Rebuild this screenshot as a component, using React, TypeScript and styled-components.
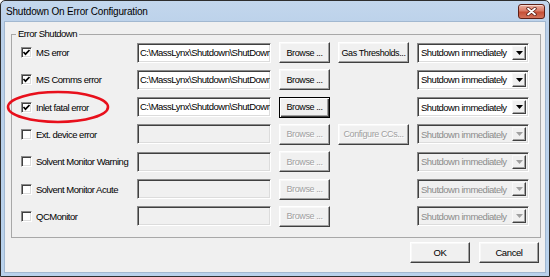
import React from 'react';
import styled, { createGlobalStyle } from 'styled-components';

const GlobalStyle = createGlobalStyle`
    html, body {
        margin: 0;
        padding: 0;
        background: #ffffff;
    }
    body {
        font-family: "Liberation Sans", Arial, sans-serif;
    }
`;

const UI_FONT = `"Liberation Sans", Arial, sans-serif`;

const Window = styled.div`
    position: relative;
    box-sizing: border-box;
    width: 550px;
    height: 277px;
    border: 1px solid #2e2e2e;
    border-radius: 5px 5px 0 0;
    background: linear-gradient(#c3d7ed, #bad0e9 30px, #b9d2ec);
    padding: 0 3px 3px;
    display: flex;
    flex-direction: column;
    overflow: hidden;
`;

const TitleBar = styled.div`
    height: 20px;
    display: flex;
    align-items: center;
    justify-content: space-between;
    padding-left: 2px;
`;

const Title = styled.div`
    font-family: ${UI_FONT};
    font-size: 10px;
    letter-spacing: -0.2px;
    color: #000;
`;

const CloseButton = styled.div`
    box-sizing: border-box;
    width: 27px;
    height: 15px;
    margin-right: 1px;
    border: 1px solid #5e2016;
    border-radius: 3px;
    background: linear-gradient(#eab0a1, #da7b66 45%, #c64f36 55%, #d3735b);
    box-shadow: inset 0 1px 0 rgba(255, 255, 255, 0.55);
    display: flex;
    align-items: center;
    justify-content: center;
`;

const Client = styled.div`
    flex: 1;
    background: #f0f0f0;
    border: 1px solid #a2b8d0;
    display: flex;
    flex-direction: column;
    padding: 6px 4px 0 6px;
`;

const GroupBox = styled.fieldset`
    margin: 0;
    min-width: 0;
    border: 1px solid #a8a8a8;
    padding: 0 0 11px 9px;
`;

const GroupLegend = styled.legend`
    font-family: ${UI_FONT};
    font-size: 9.5px;
    letter-spacing: -0.5px;
    line-height: 12px;
    color: #000;
    padding: 0 2px;
    margin-left: -5px;
`;

const Rows = styled.div`
    display: flex;
    flex-direction: column;
    gap: 7.33px;
    margin-top: 2px;
`;

const Row = styled.div`
    display: grid;
    grid-template-columns: 108px 134px 51px 71px 112px;
    column-gap: 8px;
    align-items: center;
    height: 20px;
`;

const CheckLabel = styled.label`
    display: flex;
    align-items: center;
    gap: 4px;
    font-family: ${UI_FONT};
    font-size: 9.5px;
    letter-spacing: -0.5px;
    color: #000;
    white-space: nowrap;
`;

const CheckBox = styled.span`
    box-sizing: border-box;
    width: 11px;
    height: 11px;
    flex: none;
    background: #fff;
    border: 1px solid;
    border-color: #8a8a8a #ffffff #ffffff #8a8a8a;
    box-shadow: inset 1px 1px 0 #404040, inset -1px -1px 0 #dcdcdc;
    display: flex;
    align-items: center;
    justify-content: center;
`;

const TextBox = styled.div<{ $disabled?: boolean }>`
    box-sizing: border-box;
    height: 20px;
    background: ${p => (p.$disabled ? '#f0f0f0' : '#ffffff')};
    border: 1px solid;
    border-color: #8a8a8a #ffffff #ffffff #8a8a8a;
    box-shadow: inset 1px 1px 0 #404040, inset -1px -1px 0 #dcdcdc;
    padding: 0 2px;
    font-family: ${UI_FONT};
    font-size: 9.5px;
    letter-spacing: -0.5px;
    line-height: 18px;
    color: #000;
    white-space: nowrap;
    overflow: hidden;
`;

const Button = styled.div<{ $disabled?: boolean; $focused?: boolean }>`
    box-sizing: border-box;
    height: 21px;
    background: #f0f0f0;
    border: 1px solid;
    border-color: ${p => (p.$focused ? '#000 #000 #000 #000' : '#ffffff #404040 #404040 #ffffff')};
    box-shadow: ${p =>
        p.$focused
            ? 'inset 1px 1px 0 #ffffff, inset -1px -1px 0 #404040, inset -2px -2px 0 #a0a0a0'
            : 'inset -1px -1px 0 #a0a0a0, inset 1px 1px 0 #f8f8f8'};
    display: flex;
    align-items: center;
    justify-content: center;
    font-family: ${UI_FONT};
    font-size: 9px;
    letter-spacing: -0.4px;
    white-space: nowrap;
    color: ${p => (p.$disabled ? '#a0a0a0' : '#000')};
    text-shadow: ${p => (p.$disabled ? '1px 1px 0 #ffffff' : 'none')};
`;

const Combo = styled.div<{ $disabled?: boolean }>`
    box-sizing: border-box;
    height: 20px;
    background: ${p => (p.$disabled ? '#f0f0f0' : '#ffffff')};
    border: 1px solid;
    border-color: #8a8a8a #ffffff #ffffff #8a8a8a;
    box-shadow: inset 1px 1px 0 #404040, inset -1px -1px 0 #dcdcdc;
    display: flex;
    align-items: center;
    padding: 2px 2px 2px 3px;
`;

const ComboText = styled.div<{ $disabled?: boolean }>`
    flex: 1;
    font-family: ${UI_FONT};
    font-size: 9.5px;
    letter-spacing: -0.5px;
    color: ${p => (p.$disabled ? '#8c8c8c' : '#000')};
    white-space: nowrap;
    overflow: hidden;
`;

const ComboArrow = styled.div`
    box-sizing: border-box;
    width: 14px;
    height: 14px;
    background: #f0f0f0;
    border: 1px solid;
    border-color: #f8f8f8 #404040 #404040 #f8f8f8;
    box-shadow: inset -1px -1px 0 #a0a0a0;
    display: flex;
    align-items: center;
    justify-content: center;
`;

const Footer = styled.div`
    display: flex;
    justify-content: flex-end;
    gap: 9px;
    margin-top: 4px;
    padding-right: 2px;
`;

const FooterButton = styled(Button)`
    width: 60px;
    font-size: 9.5px;
`;

const Annotation = styled.svg`
    position: absolute;
    left: -1px;
    top: -1px;
    width: 550px;
    height: 277px;
    pointer-events: none;
`;

interface ShutdownRow {
    label: string;
    checked: boolean;
    enabled: boolean;
    focused?: boolean;
    extra?: string;
}

const SHUTDOWN_PATH = 'C:\\MassLynx\\Shutdown\\ShutDown.bat';

const rows: ShutdownRow[] = [
    { label: 'MS error', checked: true, enabled: true, extra: 'Gas Thresholds...' },
    { label: 'MS Comms error', checked: true, enabled: true },
    { label: 'Inlet fatal error', checked: true, enabled: true, focused: true },
    { label: 'Ext. device error', checked: false, enabled: false, extra: 'Configure CCs...' },
    { label: 'Solvent Monitor Warning', checked: false, enabled: false },
    { label: 'Solvent Monitor Acute', checked: false, enabled: false },
    { label: 'QCMonitor', checked: false, enabled: false },
];

const CheckMark = () => (
    <svg width="9" height="9" viewBox="0 0 9 9">
        <polyline points="1.5,4 3.5,6.2 7.5,2" fill="none" stroke="#000" strokeWidth="1.7" />
    </svg>
);

const DownArrow = ({ disabled }: { disabled?: boolean }) => (
    <svg width="7" height="4" viewBox="0 0 7 4">
        <polygon points="0,0 7,0 3.5,4" fill={disabled ? '#a0a0a0' : '#000'} />
    </svg>
);

const CloseGlyph = () => (
    <svg width="11" height="9" viewBox="0 0 11 9">
        <path d="M2 1.5 L9 7.5 M9 1.5 L2 7.5" stroke="#5a1c12" strokeWidth="3.4" strokeLinecap="round" />
        <path d="M2 1.5 L9 7.5 M9 1.5 L2 7.5" stroke="#ffffff" strokeWidth="1.8" strokeLinecap="round" />
    </svg>
);

export default function App() {
    return (
        <>
            <GlobalStyle />
            <Window>
                <TitleBar>
                    <Title>Shutdown On Error Configuration</Title>
                    <CloseButton>
                        <CloseGlyph />
                    </CloseButton>
                </TitleBar>
                <Client>
                    <GroupBox>
                        <GroupLegend>Error Shutdown</GroupLegend>
                        <Rows>
                            {rows.map(row => (
                                <Row key={row.label}>
                                    <CheckLabel>
                                        <CheckBox>{row.checked && <CheckMark />}</CheckBox>
                                        {row.label}
                                    </CheckLabel>
                                    <TextBox $disabled={!row.enabled}>
                                        {row.enabled ? SHUTDOWN_PATH : ''}
                                    </TextBox>
                                    <Button $disabled={!row.enabled} $focused={row.focused}>
                                        Browse ...
                                    </Button>
                                    {row.extra ? (
                                        <Button $disabled={!row.enabled}>{row.extra}</Button>
                                    ) : (
                                        <span />
                                    )}
                                    <Combo $disabled={!row.enabled}>
                                        <ComboText $disabled={!row.enabled}>Shutdown immediately</ComboText>
                                        <ComboArrow>
                                            <DownArrow disabled={!row.enabled} />
                                        </ComboArrow>
                                    </Combo>
                                </Row>
                            ))}
                        </Rows>
                    </GroupBox>
                    <Footer>
                        <FooterButton>OK</FooterButton>
                        <FooterButton>Cancel</FooterButton>
                    </Footer>
                </Client>
                <Annotation viewBox="0 0 550 277">
                    <ellipse cx="58" cy="107" rx="50" ry="15" fill="none" stroke="#e8101c" strokeWidth="2.6" />
                </Annotation>
            </Window>
        </>
    );
}
